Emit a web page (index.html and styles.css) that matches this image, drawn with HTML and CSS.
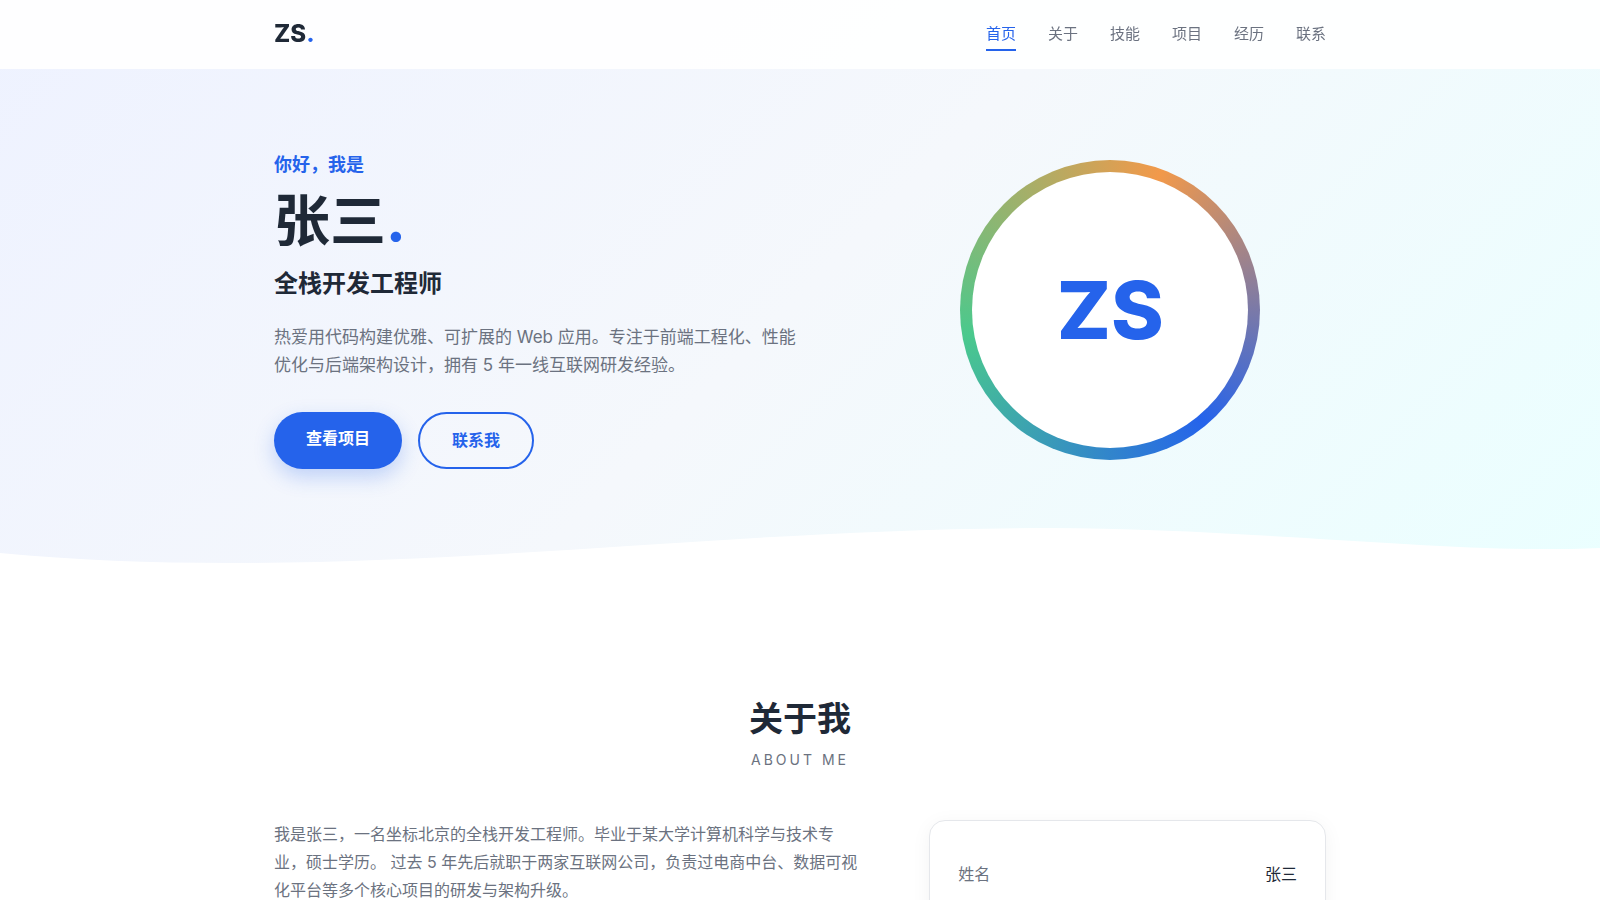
FILE: index.html
```html
<!DOCTYPE html>
<html lang="zh-CN">
<head>
    <meta charset="UTF-8">
    <meta name="viewport" content="width=device-width, initial-scale=1.0">
    <title>张三 - 全栈开发工程师</title>
    <link rel="stylesheet" href="styles.css">
</head>
<body>
    <header class="header">
        <div class="container header-inner">
            <a href="#home" class="logo">ZS<span class="dot">.</span></a>
            <nav class="nav">
                <a href="#home" class="nav-link active">首页</a>
                <a href="#about" class="nav-link">关于</a>
                <a href="#skills" class="nav-link">技能</a>
                <a href="#projects" class="nav-link">项目</a>
                <a href="#experience" class="nav-link">经历</a>
                <a href="#contact" class="nav-link">联系</a>
            </nav>
        </div>
    </header>

    <section class="hero" id="home">
        <div class="container hero-inner">
            <div class="hero-text">
                <p class="hero-greeting">你好，我是</p>
                <h1 class="hero-name">张三<span class="dot">.</span></h1>
                <h2 class="hero-role">全栈开发工程师</h2>
                <p class="hero-desc">热爱用代码构建优雅、可扩展的 Web 应用。专注于前端工程化、性能优化与后端架构设计，拥有 5 年一线互联网研发经验。</p>
                <div class="hero-actions">
                    <a href="#projects" class="btn btn-primary">查看项目</a>
                    <a href="#contact" class="btn btn-outline">联系我</a>
                </div>
            </div>
            <div class="hero-visual">
                <div class="avatar-ring">
                    <div class="avatar">ZS</div>
                </div>
            </div>
        </div>
        <svg class="wave" viewBox="0 0 1600 80" preserveAspectRatio="none" aria-hidden="true">
            <path fill="#ffffff" d="M0,33 C75,40 150,43 230,43 C510,43 760,8 1050,8 C1220,8 1420,29 1540,29 C1562,29 1580,29 1600,28 L1600,80 L0,80 Z"/>
        </svg>
    </section>

    <section class="section" id="about">
        <div class="container">
            <div class="section-head">
                <h2 class="section-title">关于我</h2>
                <p class="section-subtitle">ABOUT ME</p>
            </div>
            <div class="about-grid">
                <div class="about-text">
                    <p>我是张三，一名坐标北京的全栈开发工程师。毕业于某大学计算机科学与技术专业，硕士学历。 过去 5 年先后就职于两家互联网公司，负责过电商中台、数据可视化平台等多个核心项目的研发与架构升级。</p>
                </div>
                <ul class="about-card">
                    <li><span>姓名</span><strong>张三</strong></li>
                </ul>
            </div>
        </div>
    </section>
</body>
</html>
```
FILE: styles.css
```css
:root {
    --primary: #2563eb;
    --text: #1f2937;
    --muted: #6b7280;
    --border: #e5e7eb;
}
* {
    margin: 0;
    padding: 0;
    box-sizing: border-box;
}
body {
    font-family: Inter, "Noto Sans CJK SC", sans-serif;
    font-size: 16px;
    line-height: 28px;
    color: var(--text);
    background: #ffffff;
    overflow-x: hidden;
}
a {
    text-decoration: none;
    color: inherit;
}
ul {
    list-style: none;
}
.container {
    width: 100%;
    max-width: 1100px;
    margin: 0 auto;
    padding: 0 24px;
}
.dot {
    color: var(--primary);
    font-weight: 800;
}

/* 导航 */
.header {
    position: fixed;
    top: 0;
    left: 0;
    right: 0;
    z-index: 10;
    background: rgba(255, 255, 255, 0.9);
}
.header-inner {
    display: flex;
    justify-content: space-between;
    align-items: center;
    padding-top: 13px;
    padding-bottom: 15px;
}
.logo {
    font-size: 24px;
    line-height: 41px;
    font-weight: 800;
}
.nav {
    display: flex;
    gap: 32px;
}
.nav-link {
    font-size: 15px;
    line-height: 26px;
    padding: 4px 0 2px;
    border-bottom: 2px solid transparent;
    color: var(--muted);
}
.nav-link.active {
    color: var(--primary);
    border-bottom-color: var(--primary);
}

/* 首屏 */
.hero {
    position: relative;
    padding: 150px 0 131px;
    background: linear-gradient(135deg, #eef2ff 0%, #f5f8fc 50%, #eaffff 100%);
}
.hero-inner {
    display: grid;
    grid-template-columns: 1.3fr 1fr;
    gap: 60px;
    align-items: center;
}
.hero-greeting {
    font-size: 18px;
    line-height: 30px;
    font-weight: 600;
    color: var(--primary);
    margin-bottom: 8px;
}
.hero-name {
    font-size: 56px;
    line-height: 67px;
    font-weight: 700;
    margin-bottom: 8px;
}
.hero-role {
    font-size: 24px;
    line-height: 41px;
    font-weight: 600;
    margin-bottom: 19px;
}
.hero-desc {
    font-size: 17px;
    color: var(--muted);
    max-width: 530px;
    margin-bottom: 33px;
}
.hero-actions {
    display: flex;
    gap: 16px;
}
.btn {
    padding: 13px 32px;
    line-height: 27px;
    font-weight: 600;
    border-radius: 50px;
}
.btn-primary {
    background: var(--primary);
    color: #ffffff;
    box-shadow: 0 8px 20px rgba(37, 99, 235, 0.25);
}
.btn-outline {
    border: 2px solid var(--primary);
    color: var(--primary);
}
.hero-visual {
    display: flex;
    justify-content: center;
}
.avatar-ring {
    width: 300px;
    height: 300px;
    padding: 12px;
    border-radius: 50%;
    background: conic-gradient(from 140deg, #2563eb, #4ac98d, #f2994a, #2563eb);
}
.avatar {
    display: flex;
    justify-content: center;
    align-items: center;
    height: 100%;
    border-radius: 50%;
    background: #ffffff;
    color: var(--primary);
    font-size: 80px;
    font-weight: 800;
}
.wave {
    position: absolute;
    left: 0;
    bottom: 0;
    display: block;
    width: 100%;
    height: 80px;
}

/* 关于我 */
.section {
    padding: 90px 0;
}
.section-head {
    text-align: center;
    margin-bottom: 48px;
}
.section-title {
    font-size: 34px;
    line-height: 58px;
    font-weight: 700;
}
.section-subtitle {
    font-size: 14px;
    line-height: 24px;
    letter-spacing: 3px;
    color: var(--muted);
}
.about-grid {
    display: grid;
    grid-template-columns: 1.5fr 1fr;
    gap: 60px;
}
.about-text {
    max-width: 588px;
    color: var(--muted);
}
.about-card {
    padding: 27px 28px;
    border: 1px solid var(--border);
    border-radius: 16px;
    background: #ffffff;
    box-shadow: 0 4px 20px rgba(0, 0, 0, 0.05);
}
.about-card li {
    display: flex;
    justify-content: space-between;
    padding: 12px 0;
}
.about-card span {
    color: var(--muted);
}
.about-card strong {
    font-weight: 400;
}
```
